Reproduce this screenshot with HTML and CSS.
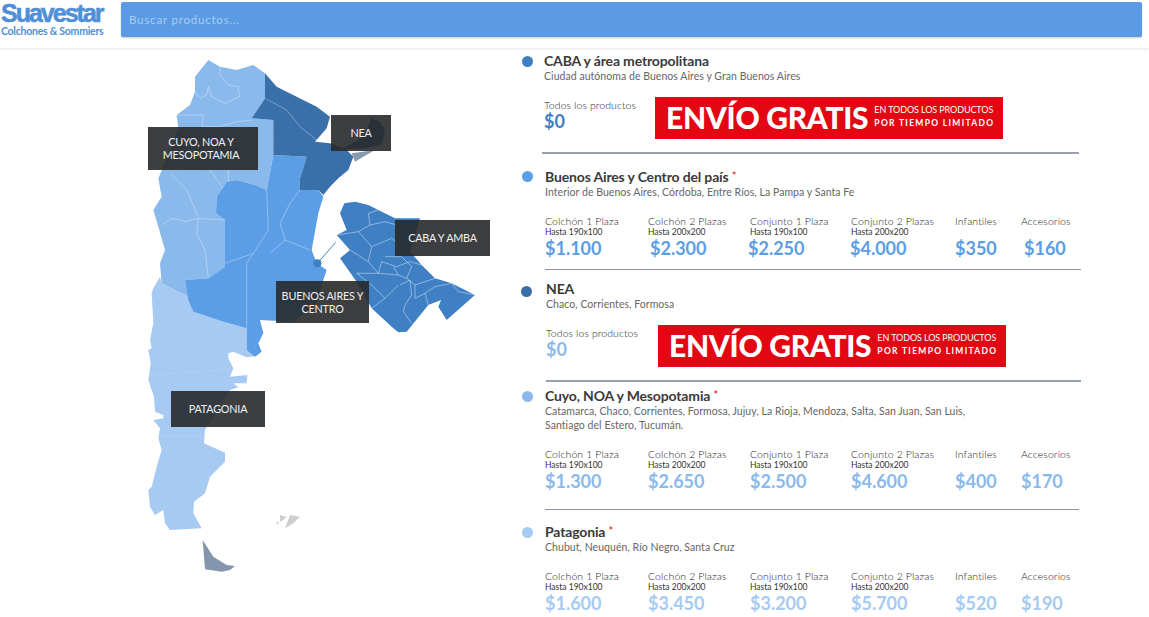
FILE: index.html
```html
<!DOCTYPE html>
<html lang="es">
<head>
    <meta charset="UTF-8">
    <meta name="viewport" content="width=device-width, initial-scale=1.0">
    <title>Suavestar - Envíos</title>
    <link rel="stylesheet" href="styles.css">
</head>
<body>
    <header class="topbar">
        <a class="logo" href="#">
            <span class="logo-name">Suavestar</span>
            <span class="logo-sub">Colchones &amp; Sommiers</span>
        </a>
        <input class="search" type="text" placeholder="Buscar productos...">
    </header>

    <main class="content">
        <div class="map">
            <svg class="map-svg" viewBox="0 0 1110 1590" width="370" height="530">
                <!-- patagonia -->
                <path class="pat" d="M90 680L95 700L175 740L190 785L280 815L350 835L350 900L380 918L350 922L310 905L295 910L295 925L310 955L300 980L352 975L350 1000L310 1000L325 1012L300 1020L225 1140L222 1180L285 1208L285 1235L240 1280L225 1330L192 1355L190 1390L215 1435L120 1440L105 1420L100 1380L75 1395L60 1370L55 1320L65 1310L80 1250L95 1200L85 1165L90 1135L70 1110L100 1105L100 1095L75 1085L72 1040L55 990L62 940L55 900L65 895L60 870L70 820L65 730L70 715Z"/>
                <path class="line-soft" d="M60 940L180 835M55 975L300 958M90 1160L225 1155"/>
                <!-- cuyo noa -->
                <path class="cuyo" d="M195 80L235 30L270 50L320 60L370 45L405 70L405 145L365 205L430 210L430 315L410 420L375 405L320 390L290 395L260 440L258 490L285 510L285 650L235 685L165 690L175 740L95 700L90 640L105 600L85 530L70 480L95 440L85 385L100 350L145 235L140 195L180 165L195 125Z"/>
                <path class="line" d="M270 50L270 75L295 105L325 110L328 140L285 160L245 140L235 110L230 135L210 145L195 125M140 195L220 195L215 230L270 230L320 215L365 210M130 360L200 340L240 360L280 415M295 360L295 395M120 370L170 420L205 500M95 525L125 505L170 515L200 505L285 510M205 505L200 550L225 600L235 685"/>
                <!-- buenos aires y centro -->
                <path class="centro" d="M430 315L530 320L510 385L508 420L565 420L580 440L565 490L545 600L560 640L590 660L580 690L560 760L490 815L390 810L400 850L385 880L395 905L375 920L350 900L350 835L280 815L190 785L175 750L165 690L235 685L285 650L285 510L258 490L260 440L290 395L320 390L375 405L410 420Z"/>
                <path class="line" d="M410 420L415 540L370 610L285 640M370 610L350 640L350 835M510 420L480 460L450 520L465 570L420 610M465 570L540 600"/>
                <!-- nea -->
                <path class="nea" d="M405 70L440 110L500 140L560 170L600 200L590 235L555 275L600 280L650 300L670 320L655 360L625 385L600 410L580 435L565 420L508 420L510 385L530 320L430 315L430 210L365 205L405 145Z"/>
                <path class="line" d="M405 145L470 180L510 230L560 270"/>
                <path class="tip" d="M665 310L735 300L700 320L675 335Z"/>
                <path class="nea" d="M605 300L700 295L755 285L765 240L750 215L725 205L700 260L650 290Z"/>
                <!-- amba -->
                <g transform="translate(615 435)">
                    <path class="amba" d="M28 25L60 20L100 30L130 45L150 55L180 70L255 70L225 170L260 210L300 250L350 265L420 300L335 375L310 335L318 315L280 330L215 410L190 412L175 400L110 340L65 260L15 190L45 165L5 120L35 105L15 55Z"/>
                    <path class="line line-amba" d="M5 120L70 110L105 90L100 55L130 45M105 90L150 80L185 90M70 110L110 155L170 130L225 170M45 165L100 200L110 155M100 200L130 235L65 235L110 270M130 235L140 200L185 215L225 200L260 210M150 185L200 185L230 215L215 250L190 240L175 215M130 235L190 240M215 250L240 270L300 250M195 270L225 255L230 300L210 330L205 350L230 385M240 270L240 310L270 295L280 330M270 295L300 275L350 265M110 270L150 310L110 340M150 310L190 270M350 265L370 290L420 300"/>
                </g>
                <path class="connector" d="M562 640L617 577"/>
                <circle class="amba" cx="562" cy="640" r="12"/>
                <!-- tierra del fuego y malvinas -->
                <path class="fuego" d="M218 1470L250 1520L290 1545L315 1548L300 1560L275 1565L225 1558Z"/>
                <path class="isles" d="M450 1395L470 1400L460 1410L450 1415ZM480 1395L510 1400L490 1420L465 1435ZM438 1418L448 1414L444 1424Z"/>
            </svg>
            <div class="tag tag-cuyo">CUYO, NOA Y MESOPOTAMIA</div>
            <div class="tag tag-nea">NEA</div>
            <div class="tag tag-caba">CABA Y AMBA</div>
            <div class="tag tag-centro">BUENOS AIRES Y CENTRO</div>
            <div class="tag tag-pat">PATAGONIA</div>
        </div>

        <div class="regions">
            <section class="region region-caba">
                <h3><span class="dot dot-amba"></span>CABA y área metropolitana</h3>
                <p class="sub">Ciudad autónoma de Buenos Aires y Gran Buenos Aires</p>
                <div class="free">
                    <div class="free-price">
                        <span class="all">Todos los productos</span>
                        <strong class="price c-amba">$0</strong>
                    </div>
                    <div class="banner">
                        <span class="banner-big">ENVÍO GRATIS</span>
                        <span class="banner-small"><span>EN TODOS LOS PRODUCTOS</span><b>POR TIEMPO LIMITADO</b></span>
                    </div>
                </div>
            </section>

            <section class="region region-centro">
                <h3><span class="dot dot-centro"></span>Buenos Aires y Centro del país <sup>*</sup></h3>
                <p class="sub">Interior de Buenos Aires, Córdoba, Entre Ríos, La Pampa y Santa Fe</p>
                <div class="prices c-centro">
                    <div><span class="name">Colchón 1 Plaza</span><small>Hasta 190x100</small><strong class="price">$1.100</strong></div>
                    <div><span class="name">Colchón 2 Plazas</span><small>Hasta 200x200</small><strong class="price in-2">$2.300</strong></div>
                    <div><span class="name">Conjunto 1 Plaza</span><small>Hasta 190x100</small><strong class="price out-2">$2.250</strong></div>
                    <div><span class="name">Conjunto 2 Plazas</span><small>Hasta 200x200</small><strong class="price out-1">$4.000</strong></div>
                    <div><span class="name">Infantiles</span><small>&nbsp;</small><strong class="price">$350</strong></div>
                    <div><span class="name">Accesorios</span><small>&nbsp;</small><strong class="price in-3">$160</strong></div>
                </div>
            </section>

            <section class="region region-nea">
                <h3><span class="dot dot-nea"></span>NEA</h3>
                <p class="sub">Chaco, Corrientes, Formosa</p>
                <div class="free">
                    <div class="free-price">
                        <span class="all">Todos los productos</span>
                        <strong class="price c-cuyo">$0</strong>
                    </div>
                    <div class="banner">
                        <span class="banner-big">ENVÍO GRATIS</span>
                        <span class="banner-small"><span>EN TODOS LOS PRODUCTOS</span><b>POR TIEMPO LIMITADO</b></span>
                    </div>
                </div>
            </section>

            <section class="region region-cuyo">
                <h3><span class="dot dot-cuyo"></span>Cuyo, NOA y Mesopotamia <sup>*</sup></h3>
                <p class="sub">Catamarca, Chaco, Corrientes, Formosa, Jujuy, La Rioja, Mendoza, Salta, San Juan, San Luis,<br>Santiago del Estero, Tucumán.</p>
                <div class="prices c-cuyo">
                    <div><span class="name">Colchón 1 Plaza</span><small>Hasta 190x100</small><strong class="price">$1.300</strong></div>
                    <div><span class="name">Colchón 2 Plazas</span><small>Hasta 200x200</small><strong class="price">$2.650</strong></div>
                    <div><span class="name">Conjunto 1 Plaza</span><small>Hasta 190x100</small><strong class="price">$2.500</strong></div>
                    <div><span class="name">Conjunto 2 Plazas</span><small>Hasta 200x200</small><strong class="price">$4.600</strong></div>
                    <div><span class="name">Infantiles</span><small>&nbsp;</small><strong class="price">$400</strong></div>
                    <div><span class="name">Accesorios</span><small>&nbsp;</small><strong class="price">$170</strong></div>
                </div>
            </section>

            <section class="region region-pat">
                <h3><span class="dot dot-pat"></span>Patagonia <sup>*</sup></h3>
                <p class="sub">Chubut, Neuquén, Río Negro, Santa Cruz</p>
                <div class="prices c-pat">
                    <div><span class="name">Colchón 1 Plaza</span><small>Hasta 190x100</small><strong class="price">$1.600</strong></div>
                    <div><span class="name">Colchón 2 Plazas</span><small>Hasta 200x200</small><strong class="price">$3.450</strong></div>
                    <div><span class="name">Conjunto 1 Plaza</span><small>Hasta 190x100</small><strong class="price">$3.200</strong></div>
                    <div><span class="name">Conjunto 2 Plazas</span><small>Hasta 200x200</small><strong class="price">$5.700</strong></div>
                    <div><span class="name">Infantiles</span><small>&nbsp;</small><strong class="price">$520</strong></div>
                    <div><span class="name">Accesorios</span><small>&nbsp;</small><strong class="price">$190</strong></div>
                </div>
            </section>
        </div>
    </main>
</body>
</html>
```

FILE: styles.css
```css
:root {
    --amba: #3f80c4;
    --nea: #3a70aa;
    --centro: #5b9ee6;
    --cuyo: #8ab9ec;
    --pat: #a6caf1;
    --tag: rgba(40, 41, 43, 0.9);
}
* {
    box-sizing: border-box;
}
html, body {
    height: 100%;
    overflow: hidden;
}
body {
    margin: 0;
    font-family: 'Lato', 'Liberation Sans', sans-serif;
    color: #333;
    background-color: #fff;
}
.topbar {
    display: flex;
    align-items: flex-start;
    height: 48px;
    padding: 2px 7px 0 1px;
    gap: 18px;
    box-shadow: 0 1px 3px rgba(0, 0, 0, 0.1);
}
.logo {
    display: block;
    flex: 0 0 102px;
    min-width: 0;
    text-decoration: none;
    color: #4f8fd8;
}
.logo-name {
    display: block;
    font-family: 'Liberation Sans', Arial, sans-serif;
    font-weight: bold;
    font-size: 25px;
    line-height: 23px;
    letter-spacing: -2px;
    white-space: nowrap;
    -webkit-text-stroke: 0.5px #4f8fd8;
}
.logo-sub {
    display: block;
    font-weight: 700;
    font-size: 10.5px;
    line-height: 12px;
    letter-spacing: -0.25px;
    white-space: nowrap;
}
.search {
    flex: 1;
    height: 35px;
    padding: 0 8px;
    border: none;
    border-radius: 2px;
    background-color: #5a9be4;
    font-family: 'Lato', sans-serif;
    font-size: 11.5px;
    letter-spacing: 0.8px;
    color: #fff;
    box-shadow: 0 1px 2px rgba(0, 0, 0, 0.2);
}
.search::placeholder {
    color: #a9cbf2;
    opacity: 1;
}
.content {
    display: flex;
}

/* map */
.map {
    position: relative;
    flex: 0 0 522px;
    height: 569px;
}
.map-svg {
    position: absolute;
    left: 130px;
    top: 2px;
    filter: blur(0.4px);
}
.cuyo { fill: var(--cuyo); }
.centro { fill: var(--centro); }
.nea { fill: var(--nea); }
.pat { fill: var(--pat); }
.amba { fill: var(--amba); }
.tip { fill: #8a9bb0; }
.fuego { fill: #8496ae; }
.isles { fill: #cfcfcf; }
.line, .line-soft, .connector {
    fill: none;
    stroke-width: 1.8;
}
.line { stroke: rgba(255, 255, 255, 0.55); }
.line-amba { stroke: rgba(255, 255, 255, 0.7); }
.line-soft { stroke: rgba(255, 255, 255, 0.2); }
.connector { stroke: var(--amba); stroke-width: 3; }
.tag {
    position: absolute;
    display: flex;
    align-items: center;
    justify-content: center;
    padding-bottom: 1px;
    background-color: var(--tag);
    color: #f2f2f2;
    font-size: 10.8px;
    line-height: 13px;
    text-align: center;
    letter-spacing: -0.2px;
}
.tag-cuyo { left: 148px; top: 79px; width: 110px; height: 43px; padding: 0 17px 1px 13px; }
.tag-nea { left: 331px; top: 67px; width: 60px; height: 36px; }
.tag-caba { left: 395px; top: 172px; width: 95px; height: 36px; }
.tag-centro { left: 276px; top: 233px; width: 93px; height: 42px; padding: 0 2px 1px; }
.tag-pat { left: 171px; top: 343px; width: 94px; height: 36px; }

/* regions */
.regions {
    flex: 0 0 570px;
}
.region {
    position: relative;
    width: 537px;
    border-bottom: 2px solid #9aa0ac;
}
.region h3 {
    margin: 0;
    font-size: 14px;
    line-height: 17px;
    font-weight: 700;
    color: #3a3a3a;
    letter-spacing: -0.15px;
}
.region sup {
    color: #e30613;
    font-size: 11px;
    line-height: 0;
    font-weight: 400;
    vertical-align: 2px;
}
.dot {
    position: absolute;
    width: 11px;
    height: 11px;
    border-radius: 50%;
}
.dot-amba { background-color: var(--amba); }
.dot-centro { background-color: var(--centro); }
.dot-nea { background-color: var(--nea); }
.dot-cuyo { background-color: var(--cuyo); }
.dot-pat { background-color: var(--pat); }
.sub {
    margin: 0;
    font-size: 10.5px;
    line-height: 14px;
    color: #666;
    letter-spacing: 0.05px;
}
.region-caba { margin-left: 20px; padding: 4px 0 0 2px; height: 106px; }
.region-centro { margin-left: 23px; padding-top: 14px; height: 116px; border-bottom-width: 1px; border-color: #8b96ad; width: 536px; }
.region-nea { margin-left: 24px; padding-top: 10px; height: 112px; width: 535px; }
.region-cuyo { margin-left: 23px; padding-top: 5px; height: 128px; width: 534px; border-bottom-width: 1px; border-color: #8b96ad; }
.region-pat { margin-left: 23px; padding-top: 13px; border: none; }
.region-caba .dot { left: -20px; top: 8px; }
.region-centro .dot { left: -23px; top: 17px; }
.region-nea .dot { left: -25px; top: 16px; }
.region-cuyo .dot { left: -23px; top: 9px; }
.region-pat .dot { left: -23px; top: 17px; }

.free {
    display: flex;
    align-items: flex-start;
    margin-top: 14px;
}
.free-price {
    flex: 0 0 111px;
    padding-top: 1px;
}
.region-nea .free-price {
    flex-basis: 112px;
}
.all {
    display: block;
    font-size: 10.5px;
    font-weight: 300;
    line-height: 14px;
    letter-spacing: 0.08px;
    color: #222;
}
.banner {
    display: flex;
    align-items: center;
    gap: 6px;
    width: 348px;
    height: 42px;
    padding: 0 0 2px 11px;
    background-color: #e30613;
    color: #fff;
}
.banner-big {
    font-weight: 900;
    font-size: 30px;
    letter-spacing: -0.3px;
    white-space: nowrap;
}
.banner-small {
    display: flex;
    flex-direction: column;
    gap: 3px;
    margin-bottom: 2px;
    font-size: 9px;
    line-height: 10px;
    white-space: nowrap;
}
.banner-small span { letter-spacing: -0.1px; }
.banner-small b {
    font-size: 8.5px;
    letter-spacing: 1.3px;
}
.prices {
    display: grid;
    grid-template-columns: 103px 102px 101px 104px 66px 60px;
    margin-top: 16px;
}
.name {
    display: block;
    font-size: 10.5px;
    font-weight: 300;
    line-height: 13px;
    letter-spacing: 0.1px;
    color: #222;
    white-space: nowrap;
}
.prices small {
    display: block;
    font-size: 8.5px;
    line-height: 9px;
    color: #333;
    white-space: nowrap;
}
.price {
    display: block;
    font-size: 18px;
    font-weight: 700;
    line-height: 23px;
    white-space: nowrap;
}
.free .price { line-height: 19px; }
.in-2 { margin-left: 2px; }
.in-3 { margin-left: 3px; }
.prices .out-1 { margin-left: -1px; }
.prices .out-2 { margin-left: -2px; }
.c-amba { color: var(--amba); }
.c-centro .price { color: var(--centro); }
.c-cuyo, .c-cuyo .price { color: var(--cuyo); }
.c-pat .price { color: var(--pat); }
```
